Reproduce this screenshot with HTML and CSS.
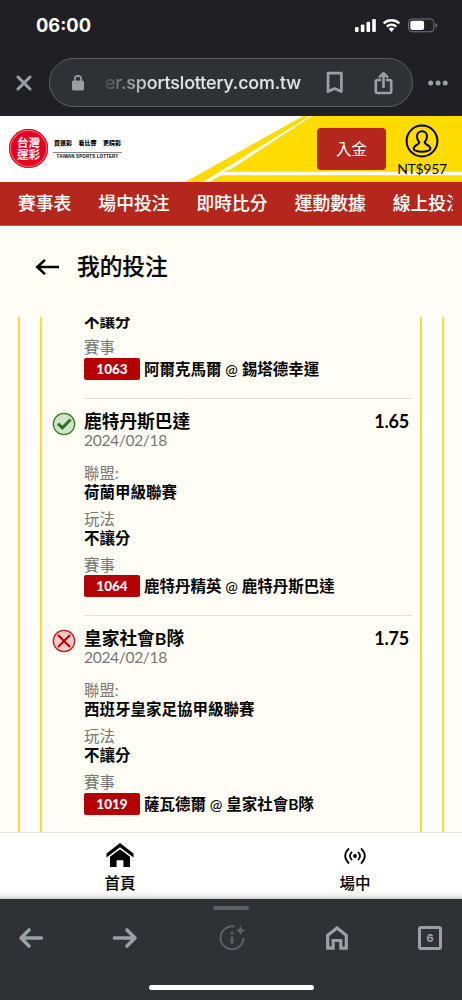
FILE: index.html
```html
<!DOCTYPE html>
<html lang="zh-Hant">
<head>
<meta charset="utf-8">
<title>我的投注</title>
<link rel="stylesheet" href="styles.css">
</head>
<body>
<div class="phone">
  <div class="chrome">
    <div class="status">
      <span class="clock">06:00</span>
      <svg class="status-icons" width="84" height="16" viewBox="0 0 84 16">
        <g fill="#fff">
          <rect x="1" y="9" width="3.6" height="5" rx="1"/><rect x="6.8" y="6.5" width="3.6" height="7.5" rx="1"/><rect x="12.5" y="3.7" width="3.6" height="10.3" rx="1"/><rect x="18.2" y="1" width="3.6" height="13" rx="1"/>
        </g>
        <g fill="none" stroke="#fff" stroke-width="2.3">
          <path d="M29.7 5.4a11.2 11.2 0 0 1 15.6 0"/><path d="M32.8 8.6a6.7 6.7 0 0 1 9.4 0"/>
        </g>
        <path d="M34.7 10.8a4 4 0 0 1 5.6 0L37.5 14z" fill="#fff"/>
        <rect x="54.5" y="1" width="25.5" height="12.8" rx="3.6" fill="none" stroke="#77777b"/>
        <rect x="56.3" y="2.8" width="13.8" height="9.3" rx="2" fill="#fff"/>
        <path d="M81.5 5.2q1.6.4 1.6 2.2t-1.6 2.2z" fill="#77777b"/>
      </svg>
    </div>
    <div class="address-row">
      <svg class="close" width="16" height="16" viewBox="0 0 16 16"><path d="M2 2l12 12M14 2L2 14" stroke="#9aa0a6" stroke-width="3" stroke-linecap="round"/></svg>
      <div class="address">
        <svg class="lock" width="12" height="16" viewBox="0 0 12 16"><rect x="0" y="5.6" width="12" height="9.8" rx="1.6" fill="#9aa0a6"/><path d="M2.8 6V4a3.2 3.2 0 0 1 6.4 0v2" fill="none" stroke="#9aa0a6" stroke-width="1.7"/></svg>
        <span class="url">er.sportslottery.com.tw</span>
        <svg class="bookmark" width="18" height="23" viewBox="0 0 18 23"><path d="M2 2.2h13.4v18.4l-6.7-3.1L2 20.6z" fill="none" stroke="#9aa0a6" stroke-width="2.7" stroke-linejoin="round"/></svg>
        <svg class="share" width="20" height="24" viewBox="0 0 20 24"><path d="M6 9H3.2Q1.8 9 1.8 10.4v10.2q0 1.4 1.4 1.4h12.6q1.4 0 1.4-1.4V10.4Q17.200 9 15.800 9H13M9.500 16V2.500M5.800 5.900l3.700-3.700 3.700 3.700" fill="none" stroke="#9aa0a6" stroke-width="2.6" stroke-linecap="round" stroke-linejoin="round"/></svg>
      </div>
      <svg class="more" width="20" height="6" viewBox="0 0 20 6"><g fill="#9aa0a6"><circle cx="2.700" cy="3" r="2.500"/><circle cx="10" cy="3" r="2.500"/><circle cx="17.200" cy="3" r="2.500"/></g></svg>
    </div>
  </div>

  <header class="site-header">
    <svg class="stripes" width="462" height="66" viewBox="0 0 462 66">
      <path d="M185 66L303 0h159v66z" fill="#ffdc00"/>
      <path d="M203 66L310 0h2L232 52.500l-9 3.300H462v3.500H221L209 66z" fill="#fff"/>
    </svg>
    <div class="brand">
      <div class="seal">台灣<br>運彩</div>
      <div class="slogan"><div class="slogan-zh"><span>買運彩</span><span>看比賽</span><span>更精彩</span></div><div class="slogan-en">TAIWAN SPORTS LOTTERY</div></div>
    </div>
    <div class="deposit">入金</div>
    <div class="account">
      <svg width="34" height="34" viewBox="0 0 34 34" fill="none" stroke="#000" stroke-width="2"><circle cx="17" cy="17" r="15.400"/><path d="M14.300 18.300C12.300 16.200 12 14 12 12.200a5 5 0 0 1 10 0c0 1.800-.3 4-2.300 6.100 0 2.700 5.700 2.700 5.700 6.500 0 1.400-1 1.400-2 1.800q-6.400 2.300-12.800 0c-1-.4-2-.4-2-1.800 0-3.800 5.700-3.800 5.700-6.500z" stroke-linejoin="round"/></svg>
      <span>NT$957</span>
    </div>
  </header>

  <nav class="tabs"><div class="tabs-track"><span>賽事表</span><span>場中投注</span><span>即時比分</span><span>運動數據</span><span>線上投注</span></div></nav>

  <div class="page-title">
    <svg width="26" height="18" viewBox="0 0 26 18"><path d="M10 1.800L2.200 9l7.800 7.200M2.200 9H24" fill="none" stroke="#000" stroke-width="2.500"/></svg>
    <h1>我的投注</h1>
  </div>

  <main class="slip">
    <div class="slip-inner">
      <section class="bet clipped">
        <div class="body">
          <div class="value">不讓分</div>
          <div class="label">賽事</div>
          <div class="match"><b class="tag">1063</b><span>阿爾克馬爾 <i>@</i> 錫塔德幸運</span></div>
        </div>
      </section>
      <section class="bet">
        <svg class="mark" width="24" height="24" viewBox="0 0 24 24"><circle cx="12" cy="12" r="10.700" fill="#d5e2cb" stroke="#397f2c" stroke-width="1.300"/><path d="M6 11.700l4.400 4.200 8.200-8.400" fill="none" stroke="#28751d" stroke-width="3"/></svg>
        <div class="body">
          <div class="pick"><span>鹿特丹斯巴達</span><span class="odds">1.65</span></div>
          <div class="date">2024/02/18</div>
          <div class="label">聯盟:</div><div class="value">荷蘭甲級聯賽</div>
          <div class="label">玩法</div><div class="value">不讓分</div>
          <div class="label">賽事</div>
          <div class="match"><b class="tag">1064</b><span>鹿特丹精英 <i>@</i> 鹿特丹斯巴達</span></div>
        </div>
      </section>
      <section class="bet">
        <svg class="mark" width="24" height="24" viewBox="0 0 24 24"><circle cx="12" cy="12" r="10.700" fill="#f3cbc4" stroke="#bd1b1b" stroke-width="1.300"/><path d="M6 6l12 12M18 6L6 18" fill="none" stroke="#b90000" stroke-width="2"/></svg>
        <div class="body">
          <div class="pick"><span>皇家社會B隊</span><span class="odds">1.75</span></div>
          <div class="date">2024/02/18</div>
          <div class="label">聯盟:</div><div class="value">西班牙皇家足協甲級聯賽</div>
          <div class="label">玩法</div><div class="value">不讓分</div>
          <div class="label">賽事</div>
          <div class="match"><b class="tag">1019</b><span>薩瓦德爾 <i>@</i> 皇家社會B隊</span></div>
        </div>
      </section>
    </div>
  </main>

  <nav class="site-nav">
    <div class="nav-item">
      <svg width="28" height="26" viewBox="0 0 28 26"><path d="M0.500 11.500L14 1l13.500 10.500v4L14 5.300.5 15.500z"/><path d="M4 14.800L14 7.300l10 7.500V25h-6.600v-6.700h-6.800V25H4z"/></svg>
      <span>首頁</span>
    </div>
    <div class="nav-item">
      <svg width="22" height="26" viewBox="0 0 22 26"><circle cx="11" cy="14" r="1.900"/><g fill="none" stroke="#000" stroke-width="1.700"><path d="M8 9.800q-4 4.200 0 8.400M14 9.800q4 4.200 0 8.400M5 6.400q-7.600 7.600 0 15.200M17 6.400q7.600 7.600 0 15.200"/></g></svg>
      <span>場中</span>
    </div>
  </nav>

  <footer class="toolbar">
    <div class="handle"></div>
    <div class="tools">
      <svg width="26" height="26" viewBox="0 0 26 26"><path d="M11 5l-8 8 8 8M4 13h19.500" fill="none" stroke="#9aa0a6" stroke-width="3.600" stroke-linecap="round" stroke-linejoin="round"/></svg>
      <svg class="forward" width="26" height="26" viewBox="0 0 26 26"><path d="M15 5l8 8-8 8M22 13H2.500" fill="none" stroke="#9aa0a6" stroke-width="3.600" stroke-linecap="round" stroke-linejoin="round"/></svg>
      <svg class="info" width="28" height="28" viewBox="0 0 28 28"><path d="M16.500 2.600A11.500 11.500 0 1 0 25.500 14" fill="none" stroke="#5d6064" stroke-width="2"/><path d="M14 12.700v7M14 7.700v2.600" stroke="#5d6064" stroke-width="2.700"/><path d="M22.500 1.500q.7 4.300 5 5-4.300.7-5 5-.7-4.300-5-5 4.300-.7 5-5z" fill="#5d6064"/></svg>
      <svg class="home" width="24" height="26" viewBox="0 0 24 26"><path d="M2.700 10.200L12 3l9.300 7.200v13h-5.500v-7.700H8.200v7.700H2.700z" fill="none" stroke="#9aa0a6" stroke-width="3.200"/></svg>
      <div class="tab-count">6</div>
    </div>
    <div class="home-bar"></div>
  </footer>
</div>
</body>
</html>
```
FILE: styles.css
```css
* { box-sizing: border-box; }
body { margin: 0; font-family: Lato, "Noto Sans CJK TC", sans-serif; color: #050505; background: #fffdf4; }
svg { display: block; flex: none; }
.phone { width: 462px; height: 1000px; overflow: hidden; display: flex; flex-direction: column; }
.phone > * { flex: none; }

.chrome { height: 116px; background: #202024; }
.status { height: 51px; padding: 0 24px 0 36px; display: flex; justify-content: space-between; align-items: center; }
.clock { font: 700 18.300px/1 Inter, sans-serif; color: #fff; }
.address-row { height: 63px; display: flex; align-items: center; padding-left: 16px; }
.address { width: 364px; height: 49px; margin: 0 15px 0 17px; border: 1px solid #5d5e61; border-radius: 25px; background: #303134; display: flex; align-items: center; padding-left: 22px; }
.url { width: 200px; margin-left: 21px; font: 500 17.900px/26px Inter, sans-serif; letter-spacing: -0.140px; white-space: nowrap; background: linear-gradient(90deg, #44464a 0, #e3e5e8 48px); -webkit-background-clip: text; color: transparent; -webkit-text-stroke: 0.200px transparent; }
.bookmark { margin-left: 21px; }
.share { margin: 0 0 0 30px; }

.site-header { height: 66px; position: relative; background: #fff; display: flex; }
.stripes { position: absolute; inset: 0; }
.brand { position: relative; width: 317px; display: flex; padding: 13px 0 0 9px; }
.seal { width: 39px; height: 39px; padding-top: 7px; border-radius: 50%; background: #e60020; box-shadow: inset 0 0 0 1px #e60020, inset 0 0 0 2px #f17882; color: #fff; font: 500 11.500px/12px "Noto Sans CJK TC", sans-serif; text-align: center; -webkit-text-stroke: 0.200px; }
.slogan { width: 69px; margin: 9px 0 0 5px; }
.slogan-zh { display: flex; justify-content: space-between; font: 900 6px/9px "Noto Sans CJK TC", sans-serif; padding: 0 1px 5px; border-bottom: 1px solid #888; }
.slogan-en { font: 700 4.500px/8px "Liberation Sans", sans-serif; text-align: center; white-space: nowrap; letter-spacing: 0.120px; }
.deposit { position: relative; width: 69px; height: 42px; margin-top: 12px; border-radius: 4px; background: #b5261c; color: #fff; font-size: 15.500px; line-height: 42px; text-align: center; }
.account { position: relative; width: 52px; margin-left: 10px; padding-top: 8px; display: flex; flex-direction: column; align-items: center; font-size: 14px; line-height: 21px; letter-spacing: -0.300px; }

.tabs { height: 44px; background: #b5261c; padding: 0 9px 0 18px; border-bottom: 1px solid #c95b51; }
.tabs-track { overflow: hidden; display: flex; gap: 27px; color: #fff; font-size: 17.800px; font-weight: 500; line-height: 42px; white-space: nowrap; -webkit-text-stroke: 0.100px; }
.tabs-track span { flex: none; }

.page-title { height: 91px; padding: 0 0 9px 35px; display: flex; align-items: center; gap: 16px; }
.page-title h1 { margin: 0; font-size: 22.700px; line-height: 34px; font-weight: 500; -webkit-text-stroke: 0.200px; }

.slip { height: 515px; margin: 0 18px; overflow: hidden; border: solid #ffd83a; border-width: 0 2px; background: #fff; padding: 0 20px; }
.slip-inner { height: 515px; overflow: hidden; border: solid #ffd83a; border-width: 0 2px; background: #fffdf4; padding: 0 8px 0 10px; }
.bet { height: 217.500px; display: flex; }
.body { flex: 1; margin-left: 8px; border-bottom: 1px solid #e4e2dc; padding-top: 10px; }
.mark { margin-top: 13px; }
.clipped { height: 81.500px; padding-left: 24px; }
.clipped .body { padding: 0; margin-top: -6px; }
.pick { height: 24px; display: flex; justify-content: space-between; padding-right: 3px; font-size: 17.700px; line-height: 25px; font-weight: 700; }
.odds { font-size: 18px; letter-spacing: -0.200px; }
.date { height: 14px; font-size: 15.600px; line-height: 14px; letter-spacing: -0.350px; color: #777; margin-bottom: 17px; }
.label { height: 19px; font-size: 15.400px; line-height: 19px; color: #777; }
.value { height: 19px; margin-bottom: 8px; font-size: 15.500px; line-height: 18px; font-weight: 700; }
.clipped .value { line-height: 20px; }
.match { display: flex; align-items: center; gap: 4px; height: 23px; font-size: 15.500px; line-height: 22px; font-weight: 700; white-space: nowrap; }
.match i { font-style: normal; font-weight: 500; font-size: 15px; }
.tag { width: 56px; height: 22px; border-radius: 2px; background: #b40000; color: #fff; text-align: center; font-size: 13.500px; }

.site-nav { height: 67px; border-top: 1px solid #e9e6e1; background: linear-gradient(#fff 58px, #eee 63px, #ccc 66px); display: flex; justify-content: space-between; padding: 9px 86px 0 99px; }
.nav-item { width: 42px; display: flex; flex-direction: column; align-items: center; font-size: 15.500px; line-height: 30px; font-weight: 500; white-space: nowrap; -webkit-text-stroke: 0.120px; }

.toolbar { height: 101px; background: #303135; display: flex; flex-direction: column; align-items: center; }
.handle { width: 36px; height: 4px; margin-top: 7px; border-radius: 2px; background: #5d6064; }
.tools { width: 462px; height: 55px; padding-left: 18px; display: flex; align-items: center; }
.forward { margin-left: 68px; }
.info { margin-left: 80px; }
.home { margin-left: 79px; }
.tab-count { margin-left: 69px; width: 24px; height: 24px; border: 3px solid #9aa0a6; border-radius: 3px; color: #9aa0a6; font: 700 11px/18px Inter, sans-serif; text-align: center; }
.home-bar { width: 165px; height: 5px; margin-top: 20px; border-radius: 3px; background: #fff; }
```
